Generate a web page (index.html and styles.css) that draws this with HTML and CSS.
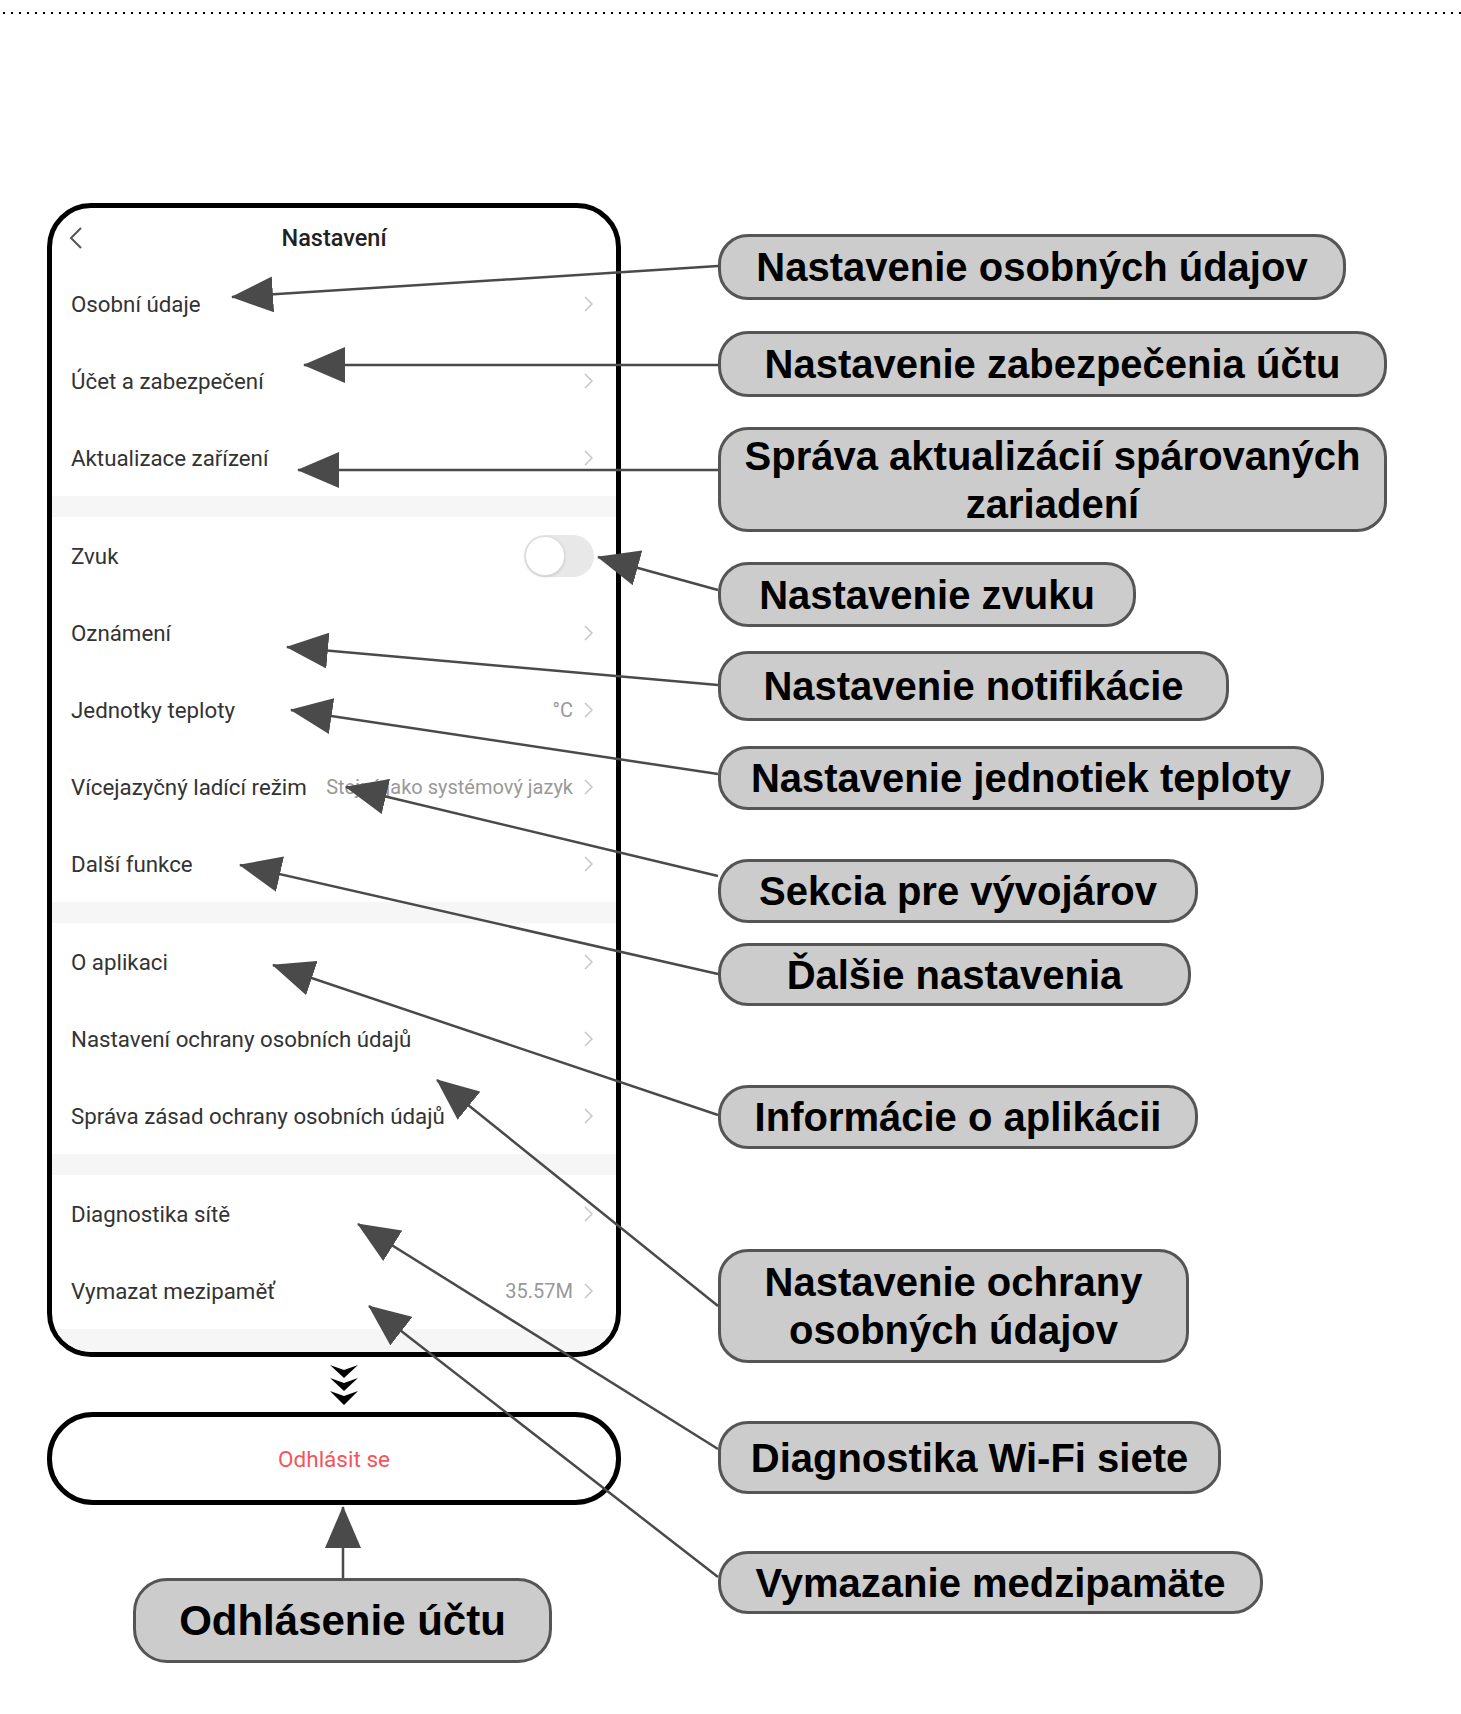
FILE: index.html
```html
<!DOCTYPE html>
<html lang="cs">
<head>
  <meta charset="UTF-8">
  <meta name="viewport" content="width=device-width, initial-scale=1">
  <title>Nastavení – popis obrazovky</title>
  <link rel="stylesheet" href="styles.css">
</head>
<body>
<div class="sheet">
  <div class="dots"></div>

  <div class="board">
    <div class="left">
      <div class="phone">
        <div class="phone-head">
          <svg class="back" width="14" height="24" viewBox="0 0 14 24"><path d="M12 2 L2 12 L12 22" fill="none" stroke="#555" stroke-width="2"/></svg>
          <span class="title">Nastavení</span>
          <span></span>
        </div>

        <div class="row"><span class="row-label">Osobní údaje</span><span class="row-end"><svg class="chev" width="9" height="16" viewBox="0 0 9 16"><path d="M1 1 L8 8 L1 15" fill="none" stroke="#c6c6c6" stroke-width="1.5"/></svg></span></div>
        <div class="row"><span class="row-label">Účet a zabezpečení</span><span class="row-end"><svg class="chev" width="9" height="16" viewBox="0 0 9 16"><path d="M1 1 L8 8 L1 15" fill="none" stroke="#c6c6c6" stroke-width="1.5"/></svg></span></div>
        <div class="row"><span class="row-label">Aktualizace zařízení</span><span class="row-end"><svg class="chev" width="9" height="16" viewBox="0 0 9 16"><path d="M1 1 L8 8 L1 15" fill="none" stroke="#c6c6c6" stroke-width="1.5"/></svg></span></div>
        <div class="band"></div>

        <div class="row"><span class="row-label">Zvuk</span><span class="row-end"><span class="toggle"><span class="knob"></span></span></span></div>
        <div class="row"><span class="row-label">Oznámení</span><span class="row-end"><svg class="chev" width="9" height="16" viewBox="0 0 9 16"><path d="M1 1 L8 8 L1 15" fill="none" stroke="#c6c6c6" stroke-width="1.5"/></svg></span></div>
        <div class="row"><span class="row-label">Jednotky teploty</span><span class="row-end"><span class="value">°C</span><svg class="chev" width="9" height="16" viewBox="0 0 9 16"><path d="M1 1 L8 8 L1 15" fill="none" stroke="#c6c6c6" stroke-width="1.5"/></svg></span></div>
        <div class="row"><span class="row-label">Vícejazyčný ladící režim</span><span class="row-end"><span class="value">Stejný jako systémový jazyk</span><svg class="chev" width="9" height="16" viewBox="0 0 9 16"><path d="M1 1 L8 8 L1 15" fill="none" stroke="#c6c6c6" stroke-width="1.5"/></svg></span></div>
        <div class="row"><span class="row-label">Další funkce</span><span class="row-end"><svg class="chev" width="9" height="16" viewBox="0 0 9 16"><path d="M1 1 L8 8 L1 15" fill="none" stroke="#c6c6c6" stroke-width="1.5"/></svg></span></div>
        <div class="band"></div>

        <div class="row"><span class="row-label">O aplikaci</span><span class="row-end"><svg class="chev" width="9" height="16" viewBox="0 0 9 16"><path d="M1 1 L8 8 L1 15" fill="none" stroke="#c6c6c6" stroke-width="1.5"/></svg></span></div>
        <div class="row"><span class="row-label">Nastavení ochrany osobních údajů</span><span class="row-end"><svg class="chev" width="9" height="16" viewBox="0 0 9 16"><path d="M1 1 L8 8 L1 15" fill="none" stroke="#c6c6c6" stroke-width="1.5"/></svg></span></div>
        <div class="row"><span class="row-label">Správa zásad ochrany osobních údajů</span><span class="row-end"><svg class="chev" width="9" height="16" viewBox="0 0 9 16"><path d="M1 1 L8 8 L1 15" fill="none" stroke="#c6c6c6" stroke-width="1.5"/></svg></span></div>
        <div class="band"></div>

        <div class="row"><span class="row-label">Diagnostika sítě</span><span class="row-end"><svg class="chev" width="9" height="16" viewBox="0 0 9 16"><path d="M1 1 L8 8 L1 15" fill="none" stroke="#c6c6c6" stroke-width="1.5"/></svg></span></div>
        <div class="row"><span class="row-label">Vymazat mezipaměť</span><span class="row-end"><span class="value">35.57M</span><svg class="chev" width="9" height="16" viewBox="0 0 9 16"><path d="M1 1 L8 8 L1 15" fill="none" stroke="#c6c6c6" stroke-width="1.5"/></svg></span></div>
        <div class="band band-last"></div>
      </div>

      <div class="more">
        <svg width="30" height="40" viewBox="0 0 30 40">
          <path d="M1 0 L15 5 L29 0 L15 13 Z" fill="#000"/>
          <path d="M1 13 L15 18 L29 13 L15 26 Z" fill="#000"/>
          <path d="M1 26 L15 31 L29 26 L15 40 Z" fill="#000"/>
        </svg>
      </div>

      <div class="logout">Odhlásit se</div>

      <div class="callout c-logout">Odhlásenie účtu</div>
    </div>

    <div class="right">
      <div class="callout c-personal">Nastavenie osobných údajov</div>
      <div class="callout c-security">Nastavenie zabezpečenia účtu</div>
      <div class="callout c-updates">Správa aktualizácií spárovaných zariadení</div>
      <div class="callout c-sound">Nastavenie zvuku</div>
      <div class="callout c-notify">Nastavenie notifikácie</div>
      <div class="callout c-units">Nastavenie jednotiek teploty</div>
      <div class="callout c-dev">Sekcia pre vývojárov</div>
      <div class="callout c-more">Ďalšie nastavenia</div>
      <div class="callout c-about">Informácie o aplikácii</div>
      <div class="callout c-privacy">Nastavenie ochrany osobných údajov</div>
      <div class="callout c-wifi">Diagnostika Wi-Fi siete</div>
      <div class="callout c-cache">Vymazanie medzipamäte</div>
    </div>
  </div>

  <!-- pointer arrows laid over the screenshot -->
  <svg class="arrows" width="1461" height="1714" viewBox="0 0 1461 1714">
    <defs>
      <marker id="head" markerUnits="userSpaceOnUse" markerWidth="42" markerHeight="36" refX="41" refY="18" orient="auto">
        <path d="M0 0 L42 18 L0 36 Z" fill="#4a4a4a"/>
      </marker>
    </defs>
    <g stroke="#4a4a4a" stroke-width="2.5" fill="none" marker-end="url(#head)">
      <line x1="718" y1="266" x2="232" y2="297"/>
      <line x1="718" y1="365" x2="304" y2="365"/>
      <line x1="718" y1="470" x2="298" y2="470"/>
      <line x1="718" y1="590" x2="598" y2="557"/>
      <line x1="718" y1="685" x2="287" y2="647"/>
      <line x1="718" y1="774" x2="291" y2="710"/>
      <line x1="718" y1="876" x2="346" y2="787"/>
      <line x1="718" y1="974" x2="240" y2="865"/>
      <line x1="718" y1="1115" x2="273" y2="965"/>
      <line x1="718" y1="1306" x2="437" y2="1080"/>
      <line x1="718" y1="1449" x2="358" y2="1224"/>
      <line x1="718" y1="1577" x2="369" y2="1306"/>
      <line x1="343" y1="1578" x2="343" y2="1507"/>
    </g>
  </svg>
</div>
</body>
</html>
```

FILE: styles.css
```css
* {
  box-sizing: border-box;
}

body {
  margin: 0;
  background: #fff;
  font-family: Roboto, "Liberation Sans", sans-serif;
}

.sheet {
  position: relative;
  width: 1461px;
  height: 1714px;
  overflow: hidden;
}

.dots {
  margin-top: 12px;
  height: 2px;
  background: repeating-linear-gradient(to right, #000 0 2px, transparent 2px 8px);
  background-position: 3px 0;
}

.board {
  display: flex;
  align-items: flex-start;
  margin-top: 189px;
  padding-left: 47px;
}

/* left column: phone + logout */
.left {
  width: 574px;
  display: flex;
  flex-direction: column;
}

.phone {
  height: 1154px;
  border: 5px solid #000;
  border-radius: 44px;
  overflow: hidden;
  background: #fff;
}

.phone-head {
  height: 57px;
  display: grid;
  grid-template-columns: 1fr auto 1fr;
  align-items: center;
  padding: 3px 17px 0 17px;
}

.title {
  font-size: 23.5px;
  font-weight: 500;
  color: #222;
}

.row {
  height: 77px;
  display: flex;
  align-items: center;
  justify-content: space-between;
  padding: 0 22px 0 19px;
}

.row-label {
  font-size: 22.3px;
  color: #333;
  white-space: nowrap;
}

.row-end {
  display: flex;
  align-items: center;
}

.value {
  font-size: 20px;
  color: #999;
  margin-right: 11px;
  white-space: nowrap;
}

.chev {
  display: block;
  margin-right: 1px;
}

.band {
  height: 21px;
  background: #f6f6f6;
}

.band:first-of-type {
  height: 20px;
}

.band-last {
  height: 30px;
}

.toggle {
  display: block;
  width: 70px;
  height: 42px;
  border-radius: 21px;
  background: #e8e8e8;
  padding: 1px;
}

.knob {
  display: block;
  width: 40px;
  height: 40px;
  border-radius: 50%;
  background: #fff;
  border: 1px solid #dcdcdc;
  box-shadow: 0 1px 3px rgba(0,0,0,0.12);
}

.more {
  margin-top: 8px;
  height: 40px;
  display: flex;
  justify-content: center;
  padding-left: 20px;
}

.more svg {
  display: block;
}

.logout {
  margin-top: 7px;
  height: 93px;
  border: 5px solid #000;
  border-radius: 46px;
  display: flex;
  align-items: center;
  justify-content: center;
  font-size: 22.5px;
  color: #f4545a;
}

/* callouts */
.right {
  margin-left: 97px;
  padding-top: 31px;
  display: flex;
  flex-direction: column;
  align-items: flex-start;
}

.callout {
  display: flex;
  align-items: center;
  justify-content: center;
  text-align: center;
  background: #cccccc;
  border: 3px solid #555;
  border-radius: 30px;
  font-family: "Liberation Sans", Arial, sans-serif;
  font-weight: bold;
  font-size: 40px;
  line-height: 48px;
  color: #000;
  height: 64px;
}

.c-logout {
  margin-top: 73px;
  margin-left: 86px;
  width: 419px;
  height: 85px;
  border-radius: 34px;
  font-size: 42px;
}

.c-personal { width: 628px; height: 66px; }
.c-security { width: 669px; height: 66px; margin-top: 31px; }
.c-updates  { width: 669px; height: 105px; margin-top: 30px; padding: 0 20px; }
.c-sound    { width: 418px; height: 65px; margin-top: 30px; }
.c-notify   { width: 511px; height: 70px; margin-top: 24px; }
.c-units    { width: 606px; margin-top: 25px; }
.c-dev      { width: 480px; margin-top: 49px; }
.c-more     { width: 473px; height: 63px; margin-top: 20px; }
.c-about    { width: 480px; margin-top: 79px; }
.c-privacy  { width: 471px; height: 114px; margin-top: 100px; padding: 0 40px; }
.c-wifi     { width: 503px; height: 73px; margin-top: 58px; }
.c-cache    { width: 545px; height: 63px; margin-top: 57px; }

.arrows {
  position: absolute;
  left: 0;
  top: 0;
  pointer-events: none;
}
```
